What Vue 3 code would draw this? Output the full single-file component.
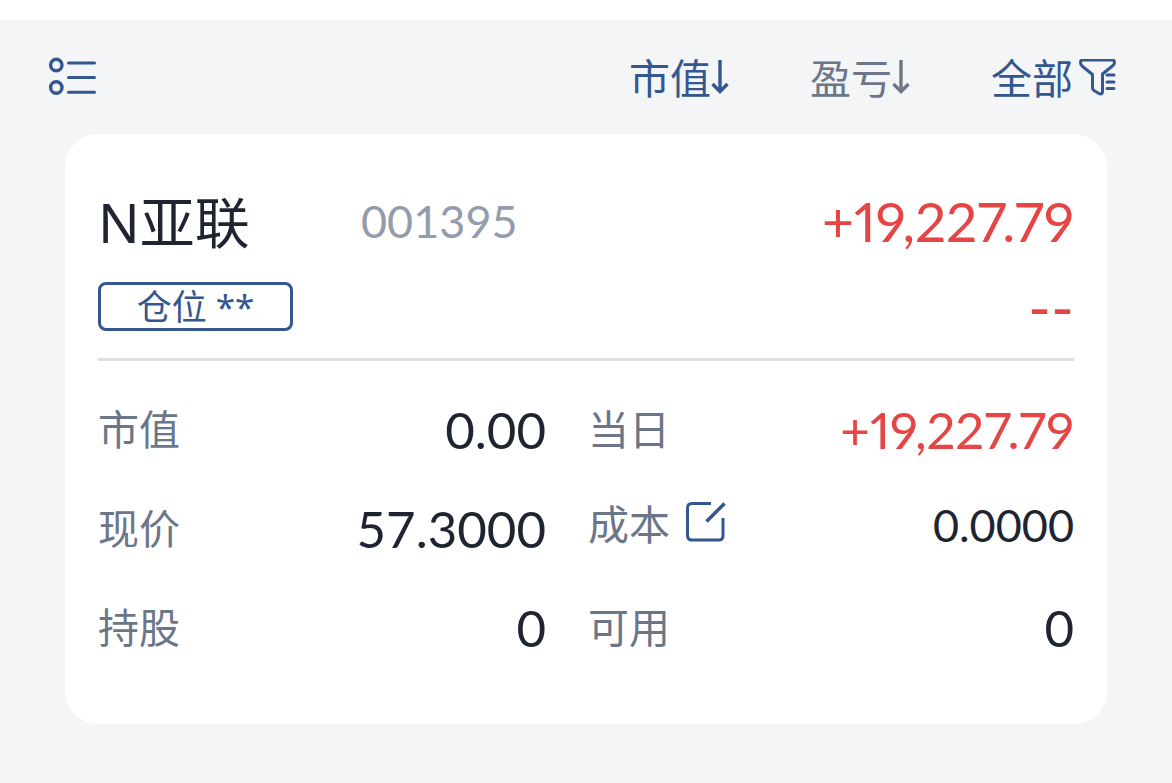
<script setup>
const tabs = [
  { label: '市值', active: true },
  { label: '盈亏', active: false },
]

const rows = [
  { label: '市值', value: '0.00' },
  { label: '当日', value: '+19,227.79', up: true },
  { label: '现价', value: '57.3000' },
  { label: '成本', value: '0.0000', editable: true },
  { label: '持股', value: '0' },
  { label: '可用', value: '0' },
]
</script>

<template>
  <main class="page">
    <header class="toolbar">
      <button class="tool" type="button" aria-label="列表">
        <svg width="48" height="40" viewBox="0 0 48 40" fill="none" stroke="currentColor" stroke-width="3">
          <circle cx="8.300" cy="8" r="5.700" stroke-width="3.400" />
          <circle cx="8.300" cy="30.500" r="5.700" stroke-width="3.400" />
          <path d="M20.500 6H46.500M20.500 20.500H46.500M20.500 35.200H46.500" stroke-linecap="round" />
        </svg>
      </button>
      <nav class="filters">
        <button v-for="tab in tabs" :key="tab.label" type="button" class="tool" :class="{ muted: !tab.active }">
          {{ tab.label }}
          <svg width="18" height="40" viewBox="0 0 18 40" fill="none" stroke="currentColor" stroke-width="3.400">
            <path d="M9 1V33" />
            <path d="M1.500 25L9 32.500L16.500 25" />
          </svg>
        </button>
        <button type="button" class="tool all">
          全部
          <svg width="38" height="40" viewBox="0 0 38 40" fill="none" stroke="currentColor" stroke-width="3" stroke-linecap="round" stroke-linejoin="round">
            <path d="M4 1H33Q35.500 1 35.500 3.500Q35.500 5 34 6.500L23.500 15V32.500Q23.500 35 21 35L19 34L15 31.500Q13.500 30.500 13.500 29V15.500L3 7Q1.500 5.500 1.500 3.500Q1.500 1 4 1Z" />
            <path d="M28 16H35M28 23H35M28 29.500H35" />
          </svg>
        </button>
      </nav>
    </header>

    <article class="card">
      <div class="summary">
        <h1 class="name">N亚联</h1>
        <span class="code">001395</span>
        <span class="profit">+19,227.79</span>
      </div>
      <div class="position">
        <span class="tag">仓位 **</span>
        <span class="rate">--</span>
      </div>
      <dl class="details">
        <div v-for="row in rows" :key="row.label" class="item" :class="{ editable: row.editable }">
          <dt>
            {{ row.label }}
            <button v-if="row.editable" class="edit" type="button" aria-label="修改成本">
              <svg width="40" height="40" viewBox="0 0 40 40" fill="none" stroke="currentColor" stroke-width="3">
                <path d="M25 1.500H6Q1.500 1.500 1.500 6V33.500Q1.500 38 6 38H33Q37 38 37 33.500V16" />
                <path d="M20.500 19.500L38.500 1.500" stroke-width="3.500" />
              </svg>
            </button>
          </dt>
          <dd :class="{ up: row.up }">{{ row.value }}</dd>
        </div>
      </dl>
    </article>
  </main>
</template>

<style>
body {
  margin: 0;
  background: #f3f5f7;
}
</style>

<style scoped>
.page {
  box-sizing: border-box;
  min-height: 100vh;
  padding-bottom: 56px;
  border-top: 20px solid #ffffff;
  background: #f3f5f7;
  color: #1f2530;
  font-family: Lato, "Noto Sans CJK SC", sans-serif;
}

button {
  display: flex;
  align-items: center;
  padding: 0;
  border: 0;
  background: none;
  color: #34578f;
  font: inherit;
  cursor: pointer;
}

svg {
  display: block;
  flex: none;
}

.toolbar {
  display: flex;
  align-items: center;
  justify-content: space-between;
  height: 114px;
  padding: 0 55px 0 48px;
}

.filters {
  display: flex;
  gap: 81px;
  padding-top: 4px;
  font-size: 41px;
  line-height: 60px;
}

.muted {
  color: #6c7689;
}

.all {
  gap: 6px;
}

.card {
  margin: 0 65px;
  padding: 47px 33px;
  border-radius: 33px;
  background: #ffffff;
}

.summary {
  display: grid;
  grid-template-columns: 263px auto 1fr;
  align-items: center;
  line-height: 80px;
}

.name {
  margin: 0;
  padding-top: 2px;
  font-family: "Noto Sans", "Noto Sans CJK SC", sans-serif;
  font-size: 55px;
  font-weight: 400;
  line-height: 78px;
}

.code {
  color: #949cab;
  font-size: 45px;
}

.profit {
  color: #e64545;
  font-size: 55px;
  font-variant-numeric: proportional-nums;
  text-align: right;
}

.position {
  display: flex;
  justify-content: space-between;
  align-items: center;
  padding: 21px 0 27px;
  border-bottom: 3px solid #e0e0e0;
}

.tag {
  box-sizing: border-box;
  min-width: 195px;
  border: 3px solid #34578f;
  border-radius: 8px;
  color: #34578f;
  font-family: "Noto Sans", "Noto Sans CJK SC", sans-serif;
  font-size: 35px;
  line-height: 43px;
  text-align: center;
}

.rate {
  color: #e64545;
  font-size: 62px;
  line-height: 49px;
}

.details {
  display: grid;
  grid-template-columns: 448fr 486fr;
  column-gap: 42px;
  margin: 0;
  padding-top: 19px;
}

.item {
  display: flex;
  align-items: center;
  justify-content: space-between;
  box-sizing: border-box;
  height: 99px;
}

dt {
  display: flex;
  align-items: center;
  gap: 16px;
  padding-bottom: 6px;
  color: #6c7689;
  font-size: 41px;
}

dd {
  margin: 0;
  font-size: 51px;
}

.up {
  color: #e64545;
  font-variant-numeric: proportional-nums;
}

.editable {
  padding-bottom: 8px;
}

.editable dd {
  font-size: 45px;
}
</style>
